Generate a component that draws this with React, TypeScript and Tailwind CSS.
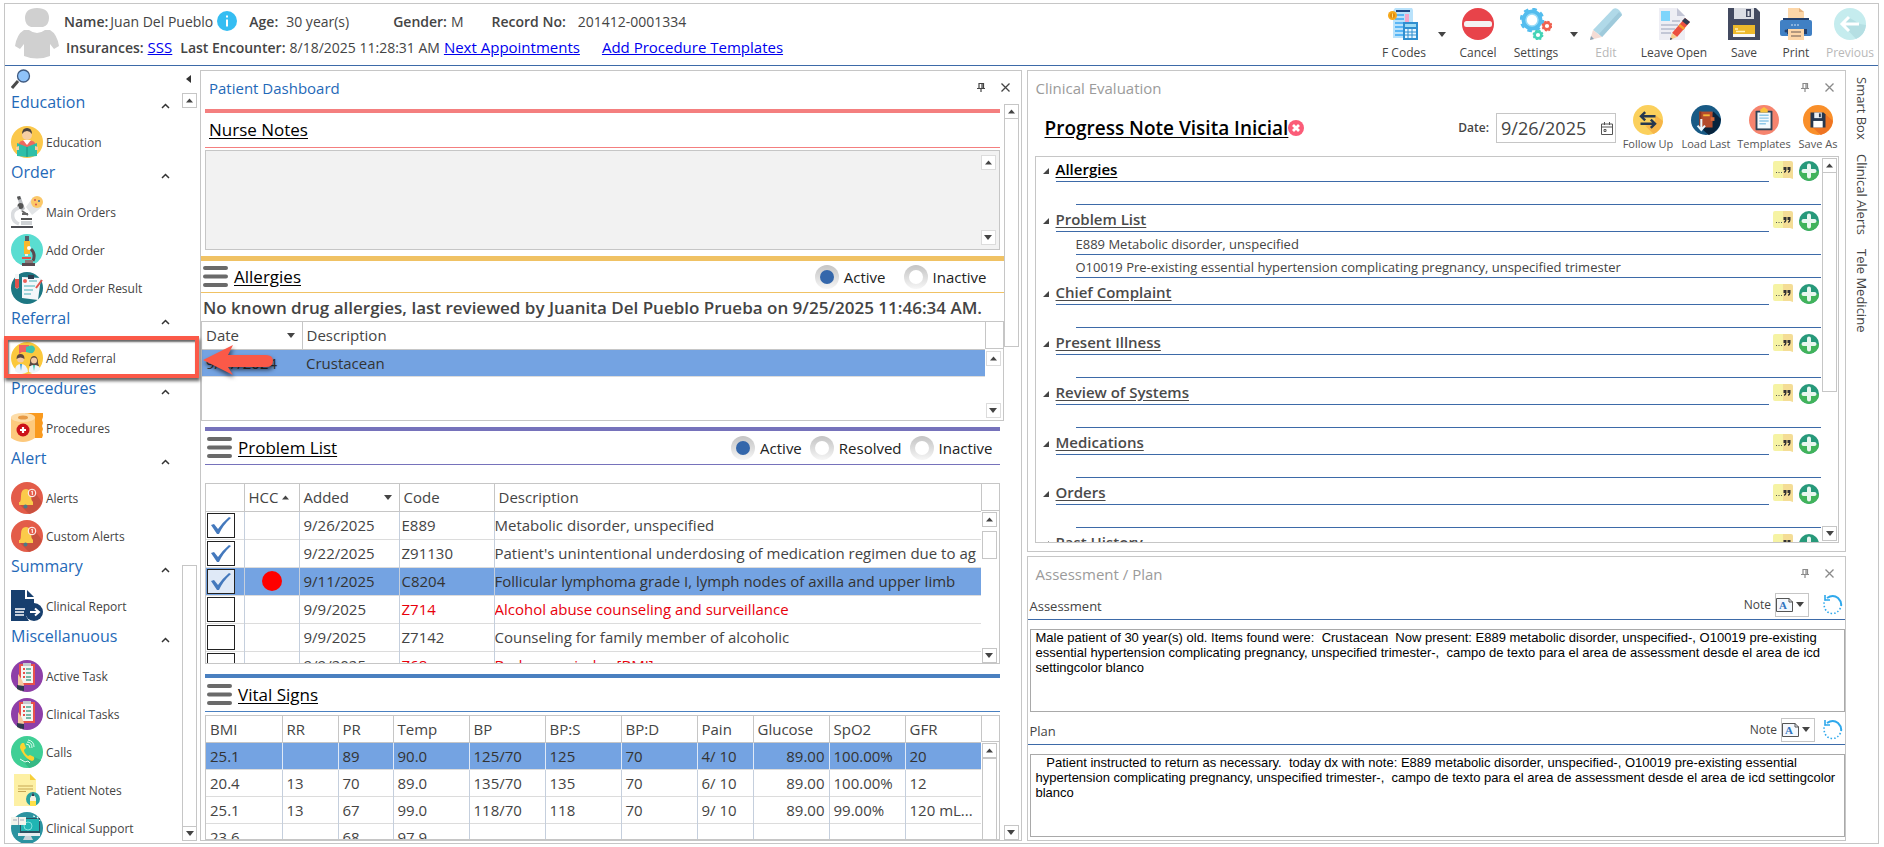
import type { ReactNode } from 'react';
import clsx from 'clsx';

/* ---------- small glyphs ---------- */

const Up = () => <svg width="7" height="5" viewBox="0 0 7 5" className="shrink-0"><path d="M0 4.5L3.5 .5L7 4.5z" fill="#444" /></svg>;
const Down = () => <svg width="8" height="5" viewBox="0 0 8 5" className="shrink-0"><path d="M0 0h8L4 5z" fill="#444" /></svg>;
const Chevron = () => <svg width="9" height="6" viewBox="0 0 9 6"><path d="M1 5L4.5 1.5L8 5" fill="none" stroke="#333" strokeWidth="1.5" /></svg>;
const Pin = () => <svg width="8" height="9" viewBox="0 0 8 9"><path d="M2 .5h4.500v5M2 0v5.500M5 .5v5M0 5.500h8M4 5.500V9" fill="none" stroke="currentColor" strokeWidth="1.200" /></svg>;
const Close = () => <svg width="9" height="9" viewBox="0 0 9 9"><path d="M.5 .5l8 8M8.500 .5l-8 8" stroke="currentColor" strokeWidth="1.300" /></svg>;
const Menu = () => <svg width="25" height="22" viewBox="0 0 25 22"><path d="M2 2h21M2 10.500h21M2 19h21" stroke="#6a6a6a" strokeWidth="4" strokeLinecap="round" /></svg>;

function Icon({ size = 32, children }: { size?: number; children: ReactNode }) {
  return <svg width={size} height={size} viewBox="0 0 32 32" className="shrink-0" aria-hidden="true">{children}</svg>;
}

/* ---------- toolbar icons ---------- */

const FCodesIcon = (
  <Icon>
    <path d="M7 0h17l1 2v28H5V3z" fill="#b9e2fb" />
    <path d="M8 2h14v2H8z" fill="#1f4a86" />
    <path d="M17 6h4v14h-4z" fill="#f4a5c8" />
    <path d="M7 7h9M7 11h9M7 15h9M7 19h8M7 23h8M7 27h8" stroke="#58b5f5" strokeWidth="2" />
    <circle cx="4.500" cy="7.500" r="4.500" fill="#f5a81c" /><circle cx="4.500" cy="7.500" r="2.500" fill="#e08a0c" />
    <path d="M4.500 5.500v4" stroke="#ffe27a" strokeWidth="1" />
    <path d="M15 14h15v18H15z" fill="#2f8fd0" /><path d="M17 16h11v3H17z" fill="#9ddcf5" />
    <path d="M17 21h11v9H17z" fill="#e8f6ff" /><path d="M20 21v9M24 21v9M17 24h11M17 27h11" stroke="#2f8fd0" strokeWidth="1" />
  </Icon>
);
const CancelIcon = (
  <Icon><circle cx="16" cy="16" r="16" fill="#e8434a" /><rect x="2" y="13" width="28" height="6" rx="2.500" fill="#f4f2f2" /></Icon>
);
const SettingsIcon = (
  <Icon>
    <circle cx="12" cy="12" r="8" fill="none" stroke="#54bdee" strokeWidth="5" />
    <circle cx="12" cy="12" r="10.800" fill="none" stroke="#54bdee" strokeWidth="3" strokeDasharray="4.500 3.980" />
    <circle cx="12" cy="12" r="6" fill="#fff" stroke="#9adcf8" strokeWidth="1.500" />
    <circle cx="27" cy="18" r="3.400" fill="none" stroke="#ef6251" strokeWidth="2.600" />
    <circle cx="27" cy="18" r="4.600" fill="none" stroke="#ef6251" strokeWidth="1.600" strokeDasharray="2 1.610" />
    <circle cx="18" cy="27" r="3.400" fill="none" stroke="#44d3b6" strokeWidth="2.600" />
    <circle cx="18" cy="27" r="4.600" fill="none" stroke="#44d3b6" strokeWidth="1.600" strokeDasharray="2 1.610" />
  </Icon>
);
const EditIcon = (
  <Icon>
    <path d="M23 1q3-2 6 1t3 5L12 29L3 22z" fill="#b0d9e8" /><path d="M29 4l3 3L12 29l-3-3z" fill="#9fcadb" />
    <path d="M3 22l9 7L0 32z" fill="#f4dcd5" /><path d="M1 28l3 3L0 32z" fill="#8aa3b5" />
  </Icon>
);
const LeaveOpenIcon = (
  <Icon>
    <path d="M1 0h18l8 8v24H1z" fill="#eeeef4" /><path d="M19 0l8 8h-8z" fill="#c3c6d6" />
    <path d="M3 3h9v10H3z" fill="#7fd5fb" />
    <path d="M14 13h8M3 17h17M3 21h14M3 25h10" stroke="#b5bacb" strokeWidth="1.500" />
    <path d="M27 10l5 4L19 29l-5-4z" fill="#ec5040" /><path d="M27 10l5 4-3 3-5-4z" fill="#2f3c52" />
    <path d="M14 25l5 4-7 3z" fill="#f7cf8b" /><path d="M12.500 29.500l2 1.500-2.500 1z" fill="#2f3c52" /><path d="M22 16l5 4-1.500 2-5-4z" fill="#f5a02f" />
  </Icon>
);
const SaveIcon = (
  <Icon>
    <path d="M0 0h28l4 4v28H0z" fill="#434a60" /><path d="M6 0h20v11H6z" fill="#dcdee3" />
    <path d="M18 1h5v8h-5z" fill="#434a60" /><path d="M19.500 3h2v5h-2z" fill="#dcdee3" />
    <path d="M5 17h22v9H5z" fill="#edb92b" /><path d="M5 26h22v3H5z" fill="#f8f8f8" />
    <path d="M7 21h3M8 23.500h9" stroke="#fff1b8" strokeWidth="1.300" />
  </Icon>
);
const PrintIcon = (
  <Icon>
    <path d="M8 0h11l5 4v8H8z" fill="#fcd6a8" /><path d="M19 0l5 4h-5z" fill="#e5b27e" />
    <path d="M3 10h26v4H3z" fill="#23406d" /><path d="M0 14q0-2 2-2h28q2 0 2 2v12q0 2-2 2H2q-2 0-2-2z" fill="#4080c4" />
    <path d="M11 17h2M14 17h2M17 17h2" stroke="#cfe3f8" /><circle cx="6" cy="23" r="1.500" fill="#23406d" />
    <path d="M7 21h20v5H7z" fill="#23406d" /><path d="M8 21h16v11H8z" fill="#fcd6a8" /><path d="M11 24h10M11 28h10" stroke="#6a5a55" />
  </Icon>
);
const PreviousIcon = (
  <Icon>
    <circle cx="16" cy="16" r="16" fill="#c5ecee" /><path d="M26 16L14 9l-5 8 13 14q9-4 10-14z" fill="#b5dfe3" />
    <path d="M25 16H9M15 9l-7 7 7 7" fill="none" stroke="#fff" strokeWidth="3" />
  </Icon>
);

/* ---------- sidebar icons ---------- */

const EducationIcon = (
  <Icon>
    <circle cx="16" cy="16" r="16" fill="#fbc84b" /><circle cx="16" cy="9" r="5" fill="#f6cfa4" />
    <path d="M11 8q0-6 5-6t5 6q-2-3-5-3t-5 3z" fill="#4b4340" /><path d="M7 20q0-6 9-6t9 6v4H7z" fill="#ee6a60" />
    <path d="M12 14h8l-4 5z" fill="#fff" /><path d="M6 17l10 4 10-4v13l-10 1-10-1z" fill="#2fbfa8" /><path d="M16 21v10" stroke="#1c8f80" />
    <path d="M5 21l3-1v4H5zM24 20l3 1v3h-3z" fill="#f6cfa4" />
  </Icon>
);
const MainOrdersIcon = (
  <Icon>
    <path d="M15 11L22 1l9 10-10 8z" fill="#e2e4e6" /><circle cx="26" cy="6" r="6" fill="#fbc868" />
    <circle cx="24" cy="4" r="1" fill="#d9534f" /><circle cx="28" cy="5" r="1" fill="#3b67a5" /><circle cx="25" cy="8.500" r="1" fill="#d9534f" />
    <path d="M6 0l3-1 5 14-4 2z" fill="#b9bcc0" /><path d="M6 1l3-1 1 3-3 1z" fill="#555" /><circle cx="9.500" cy="10" r="3" fill="#555" />
    <path d="M8 12Q0 14 2 22q1 4 6 6" fill="none" stroke="#dadcdf" strokeWidth="3.500" />
    <path d="M11 15l6 4M11 18h6" stroke="#666" strokeWidth="2" /><path d="M10 22h11v2H10z" fill="#555" /><path d="M10 25h11v4H10z" fill="#cfd2d5" /><path d="M0 30h22v2H0z" fill="#4d4d52" />
  </Icon>
);
const AddOrderIcon = (
  <Icon>
    <circle cx="16" cy="16" r="16" fill="#5addd1" /><path d="M14 2h4v5h-4z" fill="#55606a" /><path d="M13 7h6v13h-6z" fill="#fbb92c" /><path d="M14 20h3v2h-3z" fill="#eceff1" />
    <circle cx="18" cy="14" r="2" fill="#fff" /><path d="M20 15q5 5 2 12" fill="none" stroke="#5b4a50" strokeWidth="3" />
    <path d="M11 23h9v2h-9z" fill="#e0524c" /><path d="M14 26h8v3h-8z" fill="#8b7a7a" /><path d="M11 29h13v3H11z" fill="#5b4a50" />
  </Icon>
);
const OrderResultIcon = (
  <Icon>
    <circle cx="16" cy="16" r="16" fill="#1d7783" /><path d="M4 2h4v13q-2 3-4 0z" fill="#f3f5f6" /><path d="M4 7h4v8q-2 3-4 0z" fill="#e0524c" />
    <path d="M11 5l19 1-3 22-16-2z" fill="#f4f7fa" /><path d="M17 3h6v4h-6z" fill="#2d3e50" />
    <circle cx="14" cy="9" r="2" fill="#ec5f59" /><path d="M18 9h8M13 14h11M13 18h9M13 22h7" stroke="#7fc7ce" strokeWidth="1.500" />
    <path d="M31 8l-6 8" stroke="#e0524c" strokeWidth="2" />
  </Icon>
);
const ReferralIcon = (
  <Icon>
    <circle cx="16" cy="16" r="16" fill="#fbc83c" /><path d="M8 3h10v7h-7l-3 2z" fill="#ef6262" /><path d="M15 5q8-4 9 2-1 5-5 4l-4-1z" fill="#3dc2ab" />
    <circle cx="9.500" cy="17" r="3.500" fill="#f3c9a4" /><path d="M5.500 17q0-5 4-5t4 5q-4-3-8 0z" fill="#5a4640" />
    <path d="M4 29q0-7 6-7t7 8q-8 4-13-1z" fill="#eef4fa" /><path d="M9 22h2l-1 7z" fill="#3f9ad0" />
    <path d="M19 21q0-7 4-7t4 7l1 3H18z" fill="#5a4640" /><circle cx="23" cy="18.500" r="3" fill="#f3c9a4" />
    <path d="M18 30q-1-7 5-7t6 5q-6 5-11 2z" fill="#eef4fa" /><path d="M22 23h2l-1 6z" fill="#3dc2ab" />
  </Icon>
);
const ProceduresIcon = (
  <Icon>
    <path d="M14 1h18v4l-1 3 1 3-1 3 1 3-1 3 1 3-1 3H14z" fill="#f99a1f" /><path d="M0 5h24v21q-12 8-24 0z" fill="#fdc97d" />
    <ellipse cx="12" cy="5.500" rx="12" ry="4.500" fill="#fddda9" /><ellipse cx="12" cy="5.500" rx="5" ry="2" fill="#e79a45" />
    <circle cx="12" cy="18" r="6.500" fill="#cc1119" /><path d="M12 15v6M9 18h6" stroke="#fff" strokeWidth="2.200" />
  </Icon>
);
const AlertIcon = (
  <Icon>
    <circle cx="16" cy="16" r="16" fill="#e35c49" /><path d="M22 8l9 12q-3 9-13 12l-9-9z" fill="#c8503f" />
    <path d="M9 20q1-2 1-6 0-7 5-7t5 7q0 4 2 6v3H8v-3z" fill="#fbcb4a" /><circle cx="14.500" cy="24.500" r="2" fill="#4d7a86" />
    <circle cx="21" cy="11" r="3.800" fill="#e35c49" stroke="#fff" /><path d="M20.300 9.800l1-.7v4" fill="none" stroke="#fff" />
  </Icon>
);
const ReportIcon = (
  <Icon>
    <path d="M0 0h14v9h9v5q-9 2-8 12l3 5H0z" fill="#173f6e" /><path d="M16 0l7 7h-7z" fill="#173f6e" />
    <path d="M4 19h10M4 22h9M4 25h9" stroke="#fff" strokeWidth="1.300" /><circle cx="23" cy="22" r="9" fill="#173f6e" />
    <path d="M19 22h8M24 18.500l4 3.500-4 3.500" fill="none" stroke="#fff" strokeWidth="2" />
  </Icon>
);
const TaskIcon = (
  <Icon>
    <circle cx="16" cy="16" r="16" fill="#8e3fa8" /><path d="M8 4h16v21H8z" fill="#e8514c" /><path d="M10 6h12v17H10z" fill="#f3f6f3" />
    <path d="M12 3h8v3h-8z" fill="#c5c9cd" /><path d="M12 9h2M12 13h2M12 17h2" stroke="#e8514c" strokeWidth="2" />
    <path d="M15 9h5M15 13h5M15 17h5M15 20h5" stroke="#4ea58f" strokeWidth="1.300" /><path d="M7 14l4 6 2 5-2 6-4-1z" fill="#f5c9a0" /><path d="M6 25l7 1v5q-4 0-7-2z" fill="#2d3a50" />
  </Icon>
);
const CallsIcon = (
  <Icon>
    <circle cx="16" cy="16" r="16" fill="#3fcf95" /><path d="M23 21l7 3q-4 7-12 8l-6-7z" fill="#36b884" />
    <path d="M11 7q-4 3 0 9 4 7 10 9 3-1 2-4l-4-2-2 1q-4-3-4-6l2-2-2-5z" fill="#fdd32f" />
    <path d="M15 8q4 0 4 4M16 6q5 0 5 6M17 4q6 1 6 7" fill="none" stroke="#eafff5" strokeWidth=".9" /><path d="M9 23l5 3 3-1 2 2" fill="none" stroke="#eafff5" />
  </Icon>
);
const NotesIcon = (
  <Icon>
    <path d="M3 0h16l6 6v26H3z" fill="#fdf0a4" /><path d="M19 0l6 6h-6z" fill="#f6cf3c" /><path d="M7 12h15M7 15h15M7 17.500h8" stroke="#c7a755" strokeWidth="1.200" />
    <circle cx="22" cy="25" r="7" fill="#2aa3a0" /><path d="M22 19l3 5v7h-6v-7z" fill="#f4f0e2" /><path d="M22 18l1.500 4h-3z" fill="#2d3a50" /><path d="M19 27h6v5h-6z" fill="#fde04a" />
  </Icon>
);
const SupportIcon = (
  <Icon>
    <circle cx="16" cy="16" r="16" fill="#2b93a0" /><path d="M9 6h20v15H9z" fill="#2d5263" /><path d="M10 7h18v12H10z" fill="#1fb5b3" /><circle cx="17" cy="14" r="4" fill="none" stroke="#7fe0dc" />
    <path d="M0 5h15v8H0z" fill="#f2f4ec" /><path d="M7.500 5v8M2 8h4M9 8h4" stroke="#aab" /><path d="M7 21h22v3H7z" fill="#e8edf0" /><path d="M14 24h6l2 4H12z" fill="#c8d2d8" />
    <path d="M22 4l4 1 3 4" fill="none" stroke="#fff" strokeWidth="1.200" strokeDasharray="2 2" />
  </Icon>
);

/* ---------- note action icons ---------- */

const FollowUpIcon = (
  <Icon size={30}>
    <circle cx="16" cy="16" r="16" fill="#fbd05c" /><path d="M24 11l8 6q-1 9-10 14l-9-9 10-2z" fill="#f6b548" />
    <path d="M24 12H9M13 7.500L8.500 12l4.500 4.500M8 20h15M19 15.500l4.500 4.500-4.500 4.500" fill="none" stroke="#26374f" strokeWidth="2.600" />
  </Icon>
);
const LoadLastIcon = (
  <Icon size={30}>
    <circle cx="16" cy="16" r="16" fill="#185a85" /><path d="M24 7l8 8q-1 13-13 17l-8-7z" fill="#07233c" />
    <path d="M9 7h14v17H9z" fill="#b34b2c" /><path d="M9 7h2v17H9z" fill="#8a3420" /><path d="M13 10h7v2h-7z" fill="#f6b73c" /><path d="M21 13h4v4h-4z" fill="#d96a3a" />
    <path d="M11 15v11M7 22l4 4.500 4-4.500" fill="none" stroke="#e8f7ff" strokeWidth="2.200" />
  </Icon>
);
const TemplatesIcon = (
  <Icon size={30}>
    <circle cx="16" cy="16" r="16" fill="#f6846e" /><rect x="7" y="6" width="18" height="21" rx="1" fill="#2f4256" /><path d="M9 8h14v17H9z" fill="#f4fafd" />
    <path d="M12 5l4-3 4 3v3h-8z" fill="#f9c33c" /><path d="M11 11h10M11 14h10M11 17h10M11 20h7" stroke="#8fc8e8" strokeWidth="1.500" />
  </Icon>
);
const SaveAsIcon = (
  <Icon size={30}>
    <circle cx="16" cy="16" r="16" fill="#f98f2a" /><path d="M23 9l9 8q-2 11-13 15l-10-9z" fill="#ee7423" />
    <path d="M8 8h14l2 2v14H8z" fill="#26374f" /><path d="M12 8h8v6h-8z" fill="#e9eef2" /><path d="M17 9h2v4h-2z" fill="#26374f" /><path d="M11 17h10v7H11z" fill="#fff" />
  </Icon>
);

const QuoteIcon = () => (
  <svg width="20" height="19" viewBox="0 0 20 19">
    <path d="M2 0h8v17H2q-2 0-2-2V2q0-2 2-2z" fill="#f6f3a4" /><path d="M10 0h8q2 0 2 2v16l-3-1h-7z" fill="#f4dd96" />
    <path d="M3 11.500h1M5.500 11.500h1M8 11.500h1" stroke="#555" />
    <path d="M10.500 6h3v3q0 2.500-2.500 3v-1.500q1-.5 1-1.500h-1.500zM14.500 6h3v3q0 2.500-2.500 3v-1.500q1-.5 1-1.500h-1.500z" fill="#333" />
  </svg>
);
const PlusIcon = () => (
  <svg width="20" height="20" viewBox="0 0 20 20">
    <circle cx="10" cy="10" r="10" fill="#27997a" /><path d="M0 10a10 10 0 0020 0z" fill="#41b35b" />
    <path d="M10 4.500v11M4.500 10h11" stroke="#eaf7f0" strokeWidth="4" strokeLinecap="round" />
  </svg>
);

/* ---------- data ---------- */

const toolbar = [
  { label: 'F Codes', icon: FCodesIcon, css: 'w-12', caret: true },
  { label: 'Cancel', icon: CancelIcon, css: 'w-10 ml-2' },
  { label: 'Settings', icon: SettingsIcon, css: 'w-12 ml-[14px]', caret: true },
  { label: 'Edit', icon: EditIcon, css: 'w-8 ml-2', off: true },
  { label: 'Leave Open', icon: LeaveOpenIcon, css: 'w-[68px] ml-[18px]' },
  { label: 'Save', icon: SaveIcon, css: 'w-8 ml-5' },
  { label: 'Print', icon: PrintIcon, css: 'w-8 ml-5' },
  { label: 'Previous', icon: PreviousIcon, css: 'w-12 ml-[14px]', off: true },
];

const groups = [
  { title: 'Education', items: [['Education', EducationIcon]] },
  { title: 'Order', items: [['Main Orders', MainOrdersIcon], ['Add Order', AddOrderIcon], ['Add Order Result', OrderResultIcon]] },
  { title: 'Referral', items: [['Add Referral', ReferralIcon]] },
  { title: 'Procedures', items: [['Procedures', ProceduresIcon]] },
  { title: 'Alert', items: [['Alerts', AlertIcon], ['Custom Alerts', AlertIcon]] },
  { title: 'Summary', items: [['Clinical Report', ReportIcon]] },
  { title: 'Miscellanuous', items: [['Active Task', TaskIcon], ['Clinical Tasks', TaskIcon], ['Calls', CallsIcon], ['Patient Notes', NotesIcon], ['Clinical Support', SupportIcon]] },
] as { title: string; items: [string, ReactNode][] }[];

const problems = [
  { added: '9/26/2025', code: 'E889', text: 'Metabolic disorder, unspecified', checked: true },
  { added: '9/22/2025', code: 'Z91130', text: "Patient's unintentional underdosing of medication regimen due to ag", checked: true },
  { added: '9/11/2025', code: 'C8204', text: 'Follicular lymphoma grade I, lymph nodes of axilla and upper limb', checked: true, hcc: true, selected: true },
  { added: '9/9/2025', code: 'Z714', text: 'Alcohol abuse counseling and surveillance', red: true },
  { added: '9/9/2025', code: 'Z7142', text: 'Counseling for family member of alcoholic' },
  { added: '9/9/2025', code: 'Z68', text: 'Body mass index [BMI]', red: true },
];

const vitalCols = ['BMI', 'RR', 'PR', 'Temp', 'BP', 'BP:S', 'BP:D', 'Pain', 'Glucose', 'SpO2', 'GFR'];
const vitalWidths = ['w-[76px]', 'w-[56px]', 'w-[55px]', 'w-[76px]', 'w-[76px]', 'w-[76px]', 'w-[76px]', 'w-[56px]', 'w-[76px]', 'w-[76px]', 'w-[76px]'];
const vitals = [
  ['25.1', '', '89', '90.0', '125/70', '125', '70', '4/ 10', '89.00', '100.00%', '20'],
  ['20.4', '13', '70', '89.0', '135/70', '135', '70', '6/ 10', '89.00', '100.00%', '12'],
  ['25.1', '13', '67', '99.0', '118/70', '118', '70', '9/ 10', '89.00', '99.00%', '120 mL...'],
  ['23.6', '', '68', '97.9', '', '', '', '', '', '', ''],
];

const noteSections = [
  { title: 'Allergies', items: [''], active: true },
  { title: 'Problem List', items: ['E889 Metabolic disorder, unspecified', 'O10019 Pre-existing essential hypertension complicating pregnancy, unspecified trimester'] },
  { title: 'Chief Complaint', items: [''] },
  { title: 'Present Illness', items: [''] },
  { title: 'Review of Systems', items: [''] },
  { title: 'Medications', items: [''] },
  { title: 'Orders', items: [''] },
  { title: 'Past History', items: [] },
];

const noteActions: [string, ReactNode, string][] = [
  ['Follow Up', FollowUpIcon, 'w-[58px]'],
  ['Load Last', LoadLastIcon, 'w-[58px]'],
  ['Templates', TemplatesIcon, 'w-[58px]'],
  ['Save As', SaveAsIcon, 'w-[50px]'],
];

/* ---------- shared parts ---------- */

function ScrollBar({ thumb, css, soft }: { thumb?: string; css?: string; soft?: boolean }) {
  const line = soft ? 'border-[#dcdcdc]' : 'border-[#c6c6c6]';
  return (
    <div className={clsx('flex w-[15px] shrink-0 flex-col', css)}>
      <button aria-label="Scroll up" className={clsx('flex h-[15px] shrink-0 items-center justify-center border bg-white', line)}><Up /></button>
      {thumb && <div className={clsx('border border-[#c6c6c6] bg-white', thumb)} />}
      <button aria-label="Scroll down" className={clsx('mt-auto flex h-[15px] shrink-0 items-center justify-center border bg-white', line)}><Down /></button>
    </div>
  );
}

function PanelTitle({ title, active }: { title: string; active?: boolean }) {
  return (
    <div className={clsx('flex h-[33px] shrink-0 items-center pl-2 pr-[11px]', active ? 'text-[#444]' : 'text-[#8a8a8a]')}>
      <h2 className={clsx('flex-1 pt-[2px] text-[15px]', active ? 'text-[#1f69b8]' : 'text-[#9b9b9b]')}>{title}</h2>
      <button aria-label="Pin panel" className="mr-4"><Pin /></button>
      <button aria-label="Close panel"><Close /></button>
    </div>
  );
}

function SectionHead({ title, css, menu, children }: { title: string; css: string; menu?: boolean; children?: ReactNode }) {
  return (
    <div className={clsx('flex shrink-0 items-center border-b', css)}>
      {menu && <button aria-label={title + ' menu'} className="ml-[2px] mr-[6px]"><Menu /></button>}
      <h3 className={clsx('flex-1 text-[17px] text-black underline underline-offset-2', !menu && 'pl-1')}>{title}</h3>
      {children}
    </div>
  );
}

function Radio({ name, label, checked }: { name: string; label: string; checked?: boolean }) {
  return (
    <label className="flex items-center gap-[5px] text-[15px] leading-6 text-[#222]">
      <span className="flex size-6 items-center justify-center rounded-full bg-linear-to-b from-[#c4c4c4] to-[#f6f6f6]">
        <input type="radio" name={name} defaultChecked={checked} className="size-[14px] appearance-none rounded-full bg-white checked:bg-[#3467ab]" />
      </span>
      {label}
    </label>
  );
}

function GridFrame({ css, head, children, scroll }: { css: string; head: string; children: ReactNode; scroll: ReactNode }) {
  return (
    <div className={clsx('flex overflow-hidden border border-[#c6c6c6] text-[15px] leading-5 text-[#444]', css)}>
      <div className="min-w-0 flex-1 overflow-hidden">{children}</div>
      <div className="flex w-[18px] shrink-0 flex-col">
        <div className={clsx('shrink-0 border-b border-l border-[#c6c6c6]', head)} />
        {scroll}
      </div>
    </div>
  );
}

/* ---------- page parts ---------- */

function Header() {
  return (
    <header className="flex h-[62px] shrink-0 items-start border-b border-[#3d6aa8]">
      <svg width="44" height="51" viewBox="0 0 44 51" className="ml-[10px] mt-1 shrink-0">
        <path d="M22 0q12 0 12 10 0 7-6 9h-12q-6-2-6-9 0-10 12-10zM9 22h5q8 6 16 0h5q7 4 9 16l-5 3-4-5v12q-13 5-26 0V36l-4 5-5-3Q2 26 9 22z" fill="#d0d0d0" />
      </svg>
      <div className="ml-[5px] whitespace-nowrap text-[14px] text-[#444]">
        <div className="mt-1 flex h-[26px] items-center">
          <b className="font-semibold">Name:</b>
          <span className="ml-[2px]">Juan Del Pueblo</span>
          <button aria-label="Patient info" className="ml-1">
            <svg width="20" height="20" viewBox="0 0 20 20"><circle cx="10" cy="10" r="10" fill="#35bdf2" /><path d="M10 4.500v2M10 8.500v7" stroke="#fff" strokeWidth="2" /></svg>
          </button>
          <b className="ml-3 font-semibold">Age:</b><span className="ml-2">30 year(s)</span>
          <b className="ml-11 font-semibold">Gender:</b><span className="ml-1">M</span>
          <b className="ml-7 font-semibold">Record No:</b><span className="ml-3">201412-0001334</span>
        </div>
        <div className="flex h-[26px] items-center pl-[2px]">
          <b className="font-semibold">Insurances:</b><a href="#insurance" className="ml-1 text-[15px] text-[#0000ee] underline">SSS</a>
          <b className="ml-2 font-semibold">Last Encounter:</b><span className="ml-1">8/18/2025 11:28:31 AM</span>
          <a href="#appointments" className="ml-1 text-[15px] text-[#0000ee] underline">Next Appointments</a>
          <a href="#templates" className="ml-[22px] text-[15px] text-[#0000ee] underline">Add Procedure Templates</a>
        </div>
      </div>
      <div className="ml-auto mr-1 mt-1 flex">
        {toolbar.map((t) => (
          <div key={t.label} className="flex">
            <button disabled={t.off} className={clsx('flex flex-col items-center gap-1 whitespace-nowrap text-[12px] leading-[18px]', t.css, t.off ? 'text-[#b8b8b8]' : 'text-[#444]')}>
              {t.icon}
              {t.label}
            </button>
            {t.caret && <button aria-label={t.label + ' options'} className="ml-[6px] flex h-[52px] w-4 items-center justify-center"><Down /></button>}
          </div>
        ))}
      </div>
    </header>
  );
}

function Sidebar() {
  return (
    <aside className="relative flex w-[195px] shrink-0 flex-col">
      <div className="flex h-[25px] shrink-0 items-center justify-between pl-[6px] pr-[9px]">
        <svg width="20" height="20" viewBox="0 0 20 20"><path d="M1 19l6-7" stroke="#4a4a4a" strokeWidth="3" /><circle cx="12.500" cy="7" r="6" fill="#8fc3fa" stroke="#3f5a80" strokeWidth="1.300" /></svg>
        <button aria-label="Collapse"><svg width="5" height="8" viewBox="0 0 5 8"><path d="M5 0v8L0 4z" fill="#333" /></svg></button>
      </div>
      <div className="flex min-h-0 flex-1">
        <nav className="flex-1 overflow-hidden pl-[6px]">
          {groups.map((g) => (
            <section key={g.title}>
              <button className="mb-[10px] flex h-[22px] w-full items-center justify-between pr-3 text-[16px] text-[#1f69b8]">
                {g.title}
                <span className="pt-2"><Chevron /></span>
              </button>
              {g.items.map(([name, icon]) => (
                <a key={name} href="#item" className="flex h-[38px] items-center gap-[3px] text-[12px] text-[#444]">{icon}<span className="pt-[2px]">{name}</span></a>
              ))}
            </section>
          ))}
        </nav>
        <ScrollBar css="mr-[3px] mt-[2px] mb-[2px]" thumb="mt-auto -mb-[458px] h-[262px]" />
      </div>
      {/* callout frame and arrow over the Add Referral entry */}
      <div className="pointer-events-none absolute -left-px top-[270px] h-[42px] w-[195px] border-4 border-[#fb5948] shadow-[1px_3px_3px_#0009,inset_1px_2px_2px_#0009]" />
      <svg width="74" height="38" viewBox="0 0 74 38" className="pointer-events-none absolute left-[196px] top-[277px] z-10 drop-shadow-[1px_3px_2px_#0009]">
        <path d="M2 17L32 2l-5 10h38q7 0 7 6t-7 6H27l5 8z" fill="#fb5948" />
      </svg>
    </aside>
  );
}

function ProblemTable() {
  return (
    <GridFrame css="mt-[18px] mx-1 h-[181px] shrink-0" head="h-[27px]" scroll={<ScrollBar css="h-[151px] mt-px ml-px" thumb="mt-1 h-[28px]" />}>
      <table className="w-full table-fixed border-collapse whitespace-nowrap text-left">
        <thead>
          <tr className="h-[27px] border-b border-[#c6c6c6]">
            <th className="w-[38px] border-r border-[#c6c6c6] p-0" aria-label="Select" />
            <th className="w-[55px] border-r border-[#c6c6c6] p-0 pl-1 font-normal"><span className="flex items-center gap-1">HCC<Up /></span></th>
            <th className="w-[100px] border-r border-[#c6c6c6] p-0 pl-1 pr-[7px] font-normal"><span className="flex items-center justify-between">Added<Down /></span></th>
            <th className="w-[95px] border-r border-[#c6c6c6] p-0 pl-1 font-normal">Code</th>
            <th className="p-0 pl-1 font-normal">Description</th>
          </tr>
        </thead>
        <tbody>
          {problems.map((p, index) => (
            <tr key={index} className={clsx('h-[28px] border-b border-[#dcdcdc]', p.selected && 'bg-[#74a3e2] text-[#333]')}>
              <td className="border-r border-[#c5cfdd] p-0">
                <label className="relative ml-px block h-[25px] w-7">
                  <input type="checkbox" aria-label={p.text} defaultChecked={p.checked} className={clsx('peer block h-[25px] w-7 appearance-none border border-[#222]', p.selected ? 'bg-[#dfe9f7]' : 'bg-white')} />
                  <svg width="20" height="17" viewBox="0 0 20 17" className="invisible absolute left-1 top-1 peer-checked:visible"><path d="M0 8l3-1 4 5Q12 5 18 0l2 1Q12 8 8 17H6z" fill="#4479bd" /></svg>
                </label>
              </td>
              <td className="border-r border-[#c5cfdd] p-0">{p.hcc && <div className="mx-auto size-5 rounded-full bg-[#ff0000]" />}</td>
              <td className="border-r border-[#c5cfdd] p-0 pl-1">{p.added}</td>
              <td className={clsx('border-r border-[#c5cfdd] p-0 pl-[2px]', p.red && 'text-[#e8000b]')}>{p.code}</td>
              <td className={clsx('overflow-hidden p-0', p.red && 'text-[#e8000b]')}>{p.text}</td>
            </tr>
          ))}
        </tbody>
      </table>
    </GridFrame>
  );
}

function VitalTable() {
  return (
    <GridFrame css="mt-[3px] mx-1 min-h-0 flex-1" head="h-[26px]" scroll={<ScrollBar css="h-[300px] mt-px ml-px" thumb="h-[200px]" />}>
      <table className="w-full table-fixed border-collapse whitespace-nowrap text-left">
        <thead>
          <tr className="h-[26px] border-b border-[#c6c6c6]">
            {vitalCols.map((c, i) => <th key={c} className={clsx('border-r border-[#c6c6c6] p-0 pl-1 font-normal last:border-r-0', vitalWidths[i])}>{c}</th>)}
          </tr>
        </thead>
        <tbody>
          {vitals.map((row, index) => (
            <tr key={index} className={clsx('h-[27px] border-b border-[#dcdcdc]', index === 0 && 'bg-[#74a3e2] text-[#333]')}>
              {row.map((v, i) => (
                <td key={i} className={clsx('border-r p-0 px-1 last:border-r-0', index === 0 ? 'border-[#dfe9f7]' : 'border-[#c5cfdd]', i === 8 && 'text-right')}>{v}</td>
              ))}
            </tr>
          ))}
        </tbody>
      </table>
    </GridFrame>
  );
}

function Dashboard() {
  return (
    <section className="flex min-w-0 flex-1 flex-col border border-[#c6c6c6]">
      <PanelTitle title="Patient Dashboard" active />
      <div className="flex min-h-0 flex-1">
        <div className="flex min-w-0 flex-1 flex-col overflow-hidden pt-[5px]">
          <div className="mx-1"><SectionHead title="Nurse Notes" css="h-[39px] border-t-4 border-[#f47f7f]" /></div>
          <div className="mx-1 mt-[2px] flex h-[100px] shrink-0 border border-[#c6c6c6] bg-[#f2f2f2]">
            <textarea aria-label="Nurse Notes" className="flex-1 resize-none bg-transparent p-1 outline-none" />
            <ScrollBar css="my-1 mr-[3px]" soft />
          </div>
          <div className="mt-[6px]">
            <SectionHead title="Allergies" css="h-[37px] border-t-5 border-[#f0c264]" menu>
              <div className="mr-[17px] flex gap-[18px]">
                <Radio name="allergies" label="Active" checked />
                <Radio name="allergies" label="Inactive" />
              </div>
            </SectionHead>
          </div>
          <p className="h-[28px] shrink-0 whitespace-nowrap pl-[2px] text-[17px] font-semibold leading-[29px] text-[#444]">No known drug allergies, last reviewed by Juanita Del Pueblo Prueba on 9/25/2025 11:46:34 AM.</p>
          <GridFrame css="h-[100px] shrink-0" head="h-[27px]" scroll={<ScrollBar css="my-[2px] ml-px flex-1" soft />}>
            <table className="w-full table-fixed border-collapse text-left">
              <thead>
                <tr className="h-[27px] border-b border-[#c6c6c6]">
                  <th className="w-[100px] border-r border-[#c6c6c6] p-0 pl-1 pr-[7px] font-normal"><span className="flex items-center justify-between">Date<Down /></span></th>
                  <th className="p-0 pl-1 font-normal">Description</th>
                </tr>
              </thead>
              <tbody>
                <tr className="h-[27px] border-b border-[#dcdcdc] bg-[#74a3e2] text-[#333]">
                  <td className="p-0 pl-1">9/17/2024</td>
                  <td className="p-0 pl-1">Crustacean</td>
                </tr>
              </tbody>
            </table>
          </GridFrame>
          <div className="mx-1 mt-[6px]">
            <SectionHead title="Problem List" css="h-[38px] border-t-4 border-[#7672bb]" menu>
              <div className="mr-[7px] flex gap-2">
                <Radio name="problems" label="Active" checked />
                <Radio name="problems" label="Resolved" />
                <Radio name="problems" label="Inactive" />
              </div>
            </SectionHead>
          </div>
          <ProblemTable />
          <div className="mx-1 mt-[10px]"><SectionHead title="Vital Signs" css="h-[38px] border-t-4 border-[#4a80c0]" menu /></div>
          <VitalTable />
        </div>
        <ScrollBar css="mr-[2px]" thumb="-mt-px h-[229px]" />
      </div>
    </section>
  );
}

function Evaluation() {
  return (
    <section className="flex min-h-0 flex-1 flex-col border border-[#c6c6c6]">
      <PanelTitle title="Clinical Evaluation" />
      <div className="flex h-[52px] shrink-0 items-start pr-[2px] pl-[17px]">
        <h1 className="mt-[10px] text-[19px] font-semibold text-black underline underline-offset-2">Progress Note Visita Inicial</h1>
        <button aria-label="Remove note" className="mt-4">
          <svg width="16" height="16" viewBox="0 0 16 16"><circle cx="8" cy="8" r="8" fill="#fb5c78" /><path d="M5 5l6 6M11 5l-6 6" stroke="#fff" strokeWidth="2.800" /></svg>
        </button>
        <label htmlFor="note-date" className="ml-auto mr-[7px] mt-[15px] text-[12px] font-semibold text-[#444]">Date:</label>
        <div className="mt-[9px] flex h-[30px] w-[120px] items-center border border-[#c6c6c6] pl-1 pr-[2px]">
          <input id="note-date" defaultValue="9/26/2025" className="w-full min-w-0 text-[18px] text-[#444] outline-none" />
          <button aria-label="Pick date">
            <svg width="12" height="13" viewBox="0 0 12 13"><path d="M.5 2h11v10.500H.5zM0 5h12M3.500 0v3M8.500 0v3M3 7.500h2v2H3z" fill="none" stroke="#555" /></svg>
          </button>
        </div>
        <div className="ml-[3px] mt-px flex text-[11px] text-[#555]">
          {noteActions.map(([name, icon, css]) => (
            <button key={name} className={clsx('flex flex-col items-center whitespace-nowrap leading-[18px]', css)}>{icon}{name}</button>
          ))}
        </div>
      </div>
      <div className="mb-2 ml-[7px] mr-[6px] flex min-h-0 flex-1 border border-[#c6c6c6]">
        <div className="min-w-0 flex-1 overflow-hidden">
          {noteSections.map((s) => (
            <div key={s.title} className="mb-[2px] pl-5">
              <div className="flex h-[25px] items-start">
                <div className={clsx('relative h-full flex-1 border-b border-[#3d6aa8] text-[15px] font-semibold leading-[25px]', s.active ? 'text-black' : 'text-[#4a4a4a]')}>
                  <svg width="6" height="6" viewBox="0 0 6 6" className="absolute -left-[13px] top-[11px]"><path d="M6 0v6H0z" fill="#444" /></svg>
                  <a href="#section" className="underline underline-offset-2">{s.title}</a>
                </div>
                <button aria-label={s.title + ' note'} className="ml-1 mt-1"><QuoteIcon /></button>
                <button aria-label={'Add to ' + s.title} className="ml-[6px] mr-[3px] mt-1"><PlusIcon /></button>
              </div>
              {s.items.map((item, index) => (
                <div key={index} className="ml-5 mr-px h-[23px] border-b border-[#3d6aa8] text-[13px] leading-[24px] text-[#444]">{item}</div>
              ))}
            </div>
          ))}
        </div>
        <ScrollBar css="my-px mr-px" thumb="-mt-px h-[220px]" />
      </div>
    </section>
  );
}

function PlanField({ id, label, value, css }: { id: string; label: string; value: string; css: string }) {
  return (
    <div className="mb-[3px]">
      <div className="flex h-[30px] items-center border-b border-[#3d6aa8] pl-[2px] text-[13px] text-[#444]">
        <label htmlFor={id} className="flex-1 pt-1">{label}</label>
        <span className="mr-1 text-[12px]">Note</span>
        <button aria-label={label + ' note style'} className={clsx('flex h-6 w-[34px] items-center justify-between border border-[#c6c6c6] pr-1', css)}>
          <svg width="17" height="14" viewBox="0 0 17 14">
            <path d="M.5 .5H13l3.500 3.500v9.500H.5z" fill="#f4f8fd" stroke="#555" /><path d="M13 0v4h4" fill="none" stroke="#555" />
            <text x="3" y="11" fontSize="11" fontFamily="Liberation Serif" fontWeight="bold" fill="#2f74c0">A</text>
          </svg>
          <Down />
        </button>
        <button aria-label={'Reset ' + label} className="mr-[2px]">
          <svg width="21" height="21" viewBox="0 0 21 21" fill="none" stroke="#2ea8ec" strokeWidth="2">
            <path d="M5 4q6-4 11 0 4 4 3 8" /><path d="M18.500 14q-3 5.500-8 5.500-8-.5-8.500-9.500 0-2 1-4" strokeDasharray="1.500 2" strokeWidth="1.600" /><path d="M3 1v5h5" strokeWidth="1.600" />
          </svg>
        </button>
      </div>
      <div className="pl-[2px] pt-[9px]">
        <textarea id={id} defaultValue={value} className="block h-[83px] w-full resize-none overflow-hidden border border-[#a9a9a9] pl-[5px] pr-1 font-['Liberation_Sans',Arial,sans-serif] text-[13px] leading-[15px] text-black outline-none" />
      </div>
    </div>
  );
}

function App() {
  return (
    <div className="flex h-screen flex-col bg-white pb-[3px] pl-1 pr-[5px] pt-[3px] font-['Segoe_UI','Open_Sans',sans-serif]">
      <div className="flex min-h-0 flex-1 flex-col border border-[#c6c6c6]">
        <Header />
        <div className="flex min-h-0 flex-1">
          <Sidebar />
          <main className="flex min-w-0 flex-1 gap-[5px] pb-[2px] pt-1">
            <Dashboard />
            <div className="flex min-w-0 flex-1 flex-col gap-1">
              <Evaluation />
              <section className="shrink-0 border border-[#c6c6c6]">
                <PanelTitle title="Assessment / Plan" />
                <PlanField
                  id="assessment"
                  label="Assessment"
                  css="mr-[13px]"
                  value="Male patient of 30 year(s) old. Items found were:  Crustacean  Now present: E889 metabolic disorder, unspecified-, O10019 pre-existing essential hypertension complicating pregnancy, unspecified trimester-,  campo de texto para el area de assessment desde el area de icd settingcolor blanco"
                />
                <PlanField
                  id="plan"
                  label="Plan"
                  css="mr-[7px]"
                  value="   Patient instructed to return as necessary.  today dx with note: E889 metabolic disorder, unspecified-, O10019 pre-existing essential hypertension complicating pregnancy, unspecified trimester-,  campo de texto para el area de assessment desde el area de icd settingcolor blanco"
                />
              </section>
            </div>
          </main>
          <div className="flex w-8 shrink-0 gap-[14px] pt-[11px] text-[13px] leading-8 text-[#444] [writing-mode:vertical-rl]">
            <button>Smart Box</button>
            <button>Clinical Alerts</button>
            <button>Tele Medicine</button>
          </div>
        </div>
      </div>
    </div>
  );
}

export default App;
